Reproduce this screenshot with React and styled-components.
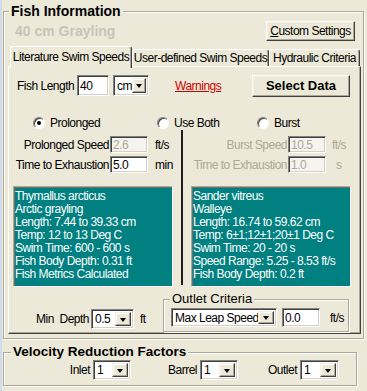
import React from "react";
import styled, { createGlobalStyle, css } from "styled-components";

const family = `"Liberation Sans", Arial, sans-serif`;

// the dialog font is a tall, narrow system face: squeeze Arial metrics a bit
const dialogText = css`
  font: 12px ${family};
  letter-spacing: -0.5px;
`;

const literature = [
  "Thymallus arcticus",
  "Arctic grayling",
  "Length: 7.44 to 39.33 cm",
  "Temp: 12 to 13 Deg C",
  "Swim Time: 600 - 600 s",
  "Fish Body Depth: 0.31 ft",
  "Fish Metrics Calculated",
];

const walleye = [
  "Sander vitreus",
  "Walleye",
  "Length: 16.74 to 59.62 cm",
  "Temp: 6±1;12±1;20±1 Deg C",
  "Swim Time: 20 - 20 s",
  "Speed Range: 5.25 - 8.53 ft/s",
  "Fish Body Depth: 0.2 ft",
];

const tabs = [
  { label: "Literature Swim Speeds", width: 122, active: true },
  { label: "User-defined Swim Speeds", width: 137 },
  { label: "Hydraulic Criteria", width: 91 },
];

const Combo = ({ value, width, height = 20, button = 16 }) => (
  <ComboBox $w={width} $h={height}>
    <ComboText>{value}</ComboText>
    <DropButton $w={button} />
  </ComboBox>
);

const Radio = ({ width, checked, children }) => (
  <RadioItem $w={width}>
    <RadioCircle $on={checked} />
    {children}
  </RadioItem>
);

const App = () => {
  return (
    <>
      <GlobalStyle />
      <Page>
        <Group $w={361}>
          <Legend $inset={5}>Fish Information</Legend>
          <Header>
            <FishName>40 cm Grayling</FishName>
            <Button $w={89} $h={20}>
              <u>C</u>ustom Settings
            </Button>
          </Header>
          <TabStrip>
            {tabs.map((t) => (
              <Tab key={t.label} $w={t.width} $active={t.active}>
                {t.label}
              </Tab>
            ))}
          </TabStrip>
          <Panel>
            <LengthRow>
              <Label $w={60}>Fish Length</Label>
              <Edit $w={32} $h={21} value="40" readOnly />
              <ComboGap>
                <Combo value="cm" width={36} height={21} button={14} />
              </ComboGap>
              <Warning>Warnings</Warning>
              <Button $w={98} $h={22} $bold>
                Select Data
              </Button>
            </LengthRow>
            <RadioRow>
              <Radio width={124} checked>
                Prolonged
              </Radio>
              <Radio width={100}>Use Both</Radio>
              <Radio width={80}>Burst</Radio>
            </RadioRow>
            <Columns>
              <Column>
                <FieldRow $top={6}>
                  <FieldLabel>Prolonged Speed</FieldLabel>
                  <Edit $w={38} $h={17} value="2.6" disabled />
                  <Unit>ft/s</Unit>
                </FieldRow>
                <FieldRow $top={3}>
                  <FieldLabel>Time to Exhaustion</FieldLabel>
                  <Edit $w={38} $h={17} value="5.0" readOnly />
                  <Unit>min</Unit>
                </FieldRow>
                <InfoBox>
                  {literature.map((line) => (
                    <div key={line}>{line}</div>
                  ))}
                </InfoBox>
              </Column>
              <Divider />
              <Column>
                <FieldRow $top={6} $disabled>
                  <FieldLabel>Burst Speed</FieldLabel>
                  <Edit $w={38} $h={17} value="10.5" disabled />
                  <Unit $gap={5}>ft/s</Unit>
                </FieldRow>
                <FieldRow $top={3} $disabled>
                  <FieldLabel>Time to Exhaustion</FieldLabel>
                  <Edit $w={38} $h={17} value="1.0" disabled />
                  <Unit $gap={9}>s</Unit>
                </FieldRow>
                <InfoBox>
                  {walleye.map((line) => (
                    <div key={line}>{line}</div>
                  ))}
                </InfoBox>
              </Column>
            </Columns>
            <BottomRow>
              <DepthRow>
                <Label $w={55}>Min&nbsp;&nbsp;Depth</Label>
                <Combo value="0.5" width={43} />
                <Unit>ft</Unit>
              </DepthRow>
              <Group $w={186} $top={5}>
                <Legend $inset={6} $plain>
                  Outlet Criteria
                </Legend>
                <OutletRow>
                  <Combo value="Max Leap Speed" width={106} height={19} />
                  <Edit $w={38} $h={19} value="0.0" readOnly />
                  <Unit $gap={10}>ft/s</Unit>
                </OutletRow>
              </Group>
            </BottomRow>
          </Panel>
        </Group>
        <Group $w={354} $top={5}>
          <Legend $inset={7} $size={13.5}>
            Velocity Reduction Factors
          </Legend>
          <FactorGrid>
            <FieldLabel>Inlet</FieldLabel>
            <Combo value="1" width={38} />
            <FieldLabel>Barrel</FieldLabel>
            <Combo value="1" width={38} />
            <FieldLabel>Outlet</FieldLabel>
            <Combo value="1" width={39} />
          </FactorGrid>
        </Group>
      </Page>
    </>
  );
};

const GlobalStyle = createGlobalStyle`
  body {
    margin: 0;
    background: #ece9d8;
    color: #000;
    ${dialogText}
  }
`;

const Page = styled.div`
  width: 367px;
  height: 391px;
  box-sizing: border-box;
  overflow: hidden;
  border-left: 2px solid #d0dbec;
  padding: 3px 0 0 1px;
`;

const Group = styled.fieldset`
  box-sizing: border-box;
  width: ${(p) => p.$w}px;
  min-width: 0;
  margin: ${(p) => p.$top || 0}px 0 0 0;
  padding: 0 0 4px 0;
  border: 1px solid #aca899;
  box-shadow: inset 1px 1px 0 #fff, 1px 1px 0 #fff;
`;

const Legend = styled.legend`
  margin-left: ${(p) => p.$inset}px;
  padding: 0 2px;
  background: #ece9d8;
  letter-spacing: 0;
  font: ${(p) =>
    p.$plain ? `13px/14px ${family}` : `bold ${p.$size || 14}px/16px ${family}`};
`;

const Header = styled.div`
  display: flex;
  align-items: center;
  justify-content: space-between;
  height: 21px;
  padding: 1px 8px 0 11px;
`;

const FishName = styled.span`
  font: bold 14px ${family};
  letter-spacing: 0;
  color: #c6c4b9;
`;

const Button = styled.button`
  box-sizing: border-box;
  width: ${(p) => p.$w}px;
  height: ${(p) => p.$h}px;
  margin: 0;
  padding: 0;
  background: #ece9d8;
  color: #000;
  white-space: nowrap;
  ${(p) =>
    p.$bold
      ? css`
          font: bold 13px ${family};
          letter-spacing: 0;
        `
      : dialogText}
  border: 1px solid;
  border-color: #fff #404040 #404040 #fff;
  box-shadow: inset -1px -1px 0 #aca899, inset 1px 1px 0 #f1efe2;
  u {
    text-decoration: underline;
  }
`;

const TabStrip = styled.div`
  position: relative;
  z-index: 1;
  display: flex;
  align-items: flex-end;
  height: 20px;
  margin: 5px 0 0 6px;
`;

const Tab = styled.div`
  box-sizing: border-box;
  width: ${(p) => p.$w}px;
  height: ${(p) => (p.$active ? 22 : 17)}px;
  margin-bottom: ${(p) => (p.$active ? -2 : 0)}px;
  padding-top: ${(p) => (p.$active ? 3 : 1)}px;
  background: #ece9d8;
  border: 1px solid;
  border-bottom: none;
  border-color: #fff #404040 #fff #fff;
  border-radius: 3px 3px 0 0;
  box-shadow: inset -1px 0 0 #aca899;
  text-align: center;
  line-height: 14px;
  white-space: nowrap;
  overflow: hidden;
`;

const Panel = styled.div`
  box-sizing: border-box;
  width: 353px;
  height: 268px;
  margin-left: 4px;
  border: 1px solid;
  border-color: #fff #404040 #404040 #fff;
  box-shadow: inset -1px -1px 0 #aca899;
`;

const LengthRow = styled.div`
  display: flex;
  align-items: center;
  height: 23px;
  margin-top: 7px;
  padding-left: 8px;
`;

const Label = styled.span`
  width: ${(p) => p.$w}px;
  white-space: nowrap;
`;

const Edit = styled.input`
  box-sizing: border-box;
  width: ${(p) => p.$w}px;
  height: ${(p) => p.$h}px;
  margin: 0;
  padding: 0 0 0 2px;
  ${dialogText}
  color: ${(p) => (p.disabled ? "#aca899" : "#000")};
  background: ${(p) => (p.disabled ? "#f5f4ef" : "#fff")};
  border: 1px solid;
  border-color: #808080 #fff #fff #808080;
  box-shadow: inset 1px 1px 0 #404040, inset -1px -1px 0 #d4d0c8;
  outline: none;
`;

const ComboGap = styled.div`
  margin-left: 4px;
`;

const ComboBox = styled.div`
  box-sizing: border-box;
  display: flex;
  align-items: stretch;
  width: ${(p) => p.$w}px;
  height: ${(p) => p.$h}px;
  padding: 2px;
  background: #fff;
  border: 1px solid;
  border-color: #808080 #fff #fff #808080;
  box-shadow: inset 1px 1px 0 #404040, inset -1px -1px 0 #d4d0c8;
`;

const ComboText = styled.span`
  flex: 1;
  display: flex;
  align-items: center;
  padding-left: 1px;
  white-space: nowrap;
  overflow: hidden;
`;

const DropButton = styled.span`
  box-sizing: border-box;
  width: ${(p) => p.$w}px;
  flex-shrink: 0;
  display: flex;
  align-items: center;
  justify-content: center;
  background: #ece9d8;
  border: 1px solid;
  border-color: #f1efe2 #404040 #404040 #f1efe2;
  box-shadow: inset -1px -1px 0 #aca899, inset 1px 1px 0 #fff;
  &::after {
    content: "";
    border-left: 3.5px solid transparent;
    border-right: 3.5px solid transparent;
    border-top: 4px solid #000;
    margin-top: 1px;
  }
`;

const Warning = styled.span`
  width: 77px;
  margin-left: 26px;
  color: #d00000;
  text-decoration: underline;
`;

const RadioRow = styled.div`
  display: flex;
  align-items: center;
  height: 14px;
  margin: 19px 0 0 24px;
`;

const RadioItem = styled.label`
  display: flex;
  align-items: center;
  gap: 5px;
  width: ${(p) => p.$w}px;
  white-space: nowrap;
`;

const RadioCircle = styled.span`
  box-sizing: border-box;
  width: 12px;
  height: 12px;
  border-radius: 50%;
  background: #fff;
  border: 1px solid;
  border-color: #808080 #fff #fff #808080;
  box-shadow: inset 1px 1px 0 #404040;
  display: flex;
  align-items: center;
  justify-content: center;
  &::after {
    content: "";
    width: 4px;
    height: 4px;
    border-radius: 50%;
    background: ${(p) => (p.$on ? "#000" : "transparent")};
  }
`;

const Columns = styled.div`
  display: grid;
  grid-template-columns: 160px 18px 160px;
  margin-left: 4px;
`;

const Column = styled.div`
  display: flex;
  flex-direction: column;
`;

const Divider = styled.div`
  justify-self: center;
  width: 2px;
  margin-bottom: 2px;
  background: #1c1c1c;
`;

const FieldRow = styled.div`
  display: grid;
  grid-template-columns: 96px 38px auto;
  column-gap: 1px;
  align-items: center;
  height: 17px;
  margin-top: ${(p) => p.$top}px;
  color: ${(p) => (p.$disabled ? "#aca899" : "#000")};
`;

const FieldLabel = styled.span`
  text-align: right;
  white-space: nowrap;
`;

const Unit = styled.span`
  margin-left: ${(p) => p.$gap ?? 6}px;
  white-space: nowrap;
`;

const InfoBox = styled.div`
  box-sizing: border-box;
  width: 160px;
  height: 101px;
  margin-top: 13px;
  padding: 3px 1px;
  background: #008080;
  color: #fff;
  line-height: 13px;
  white-space: nowrap;
  overflow: hidden;
  border: 1px solid;
  border-color: #aca899 #fff #fff #aca899;
  box-shadow: inset 1px 1px 0 #716f64;
`;

const BottomRow = styled.div`
  display: flex;
  align-items: flex-start;
`;

const DepthRow = styled.div`
  box-sizing: border-box;
  display: flex;
  align-items: center;
  width: 154px;
  height: 20px;
  margin-top: 22px;
  padding-left: 27px;
`;

const OutletRow = styled.div`
  display: flex;
  align-items: center;
  gap: 5px;
  padding: 2px 0 0 7px;
  & > span:last-child {
    margin-left: 5px;
  }
`;

const FactorGrid = styled.div`
  display: grid;
  grid-template-columns: 86px 38px 63px 38px 56px 39px;
  column-gap: 3px;
  align-items: center;
  height: 20px;
  padding-bottom: 1px;
`;

export default App;
